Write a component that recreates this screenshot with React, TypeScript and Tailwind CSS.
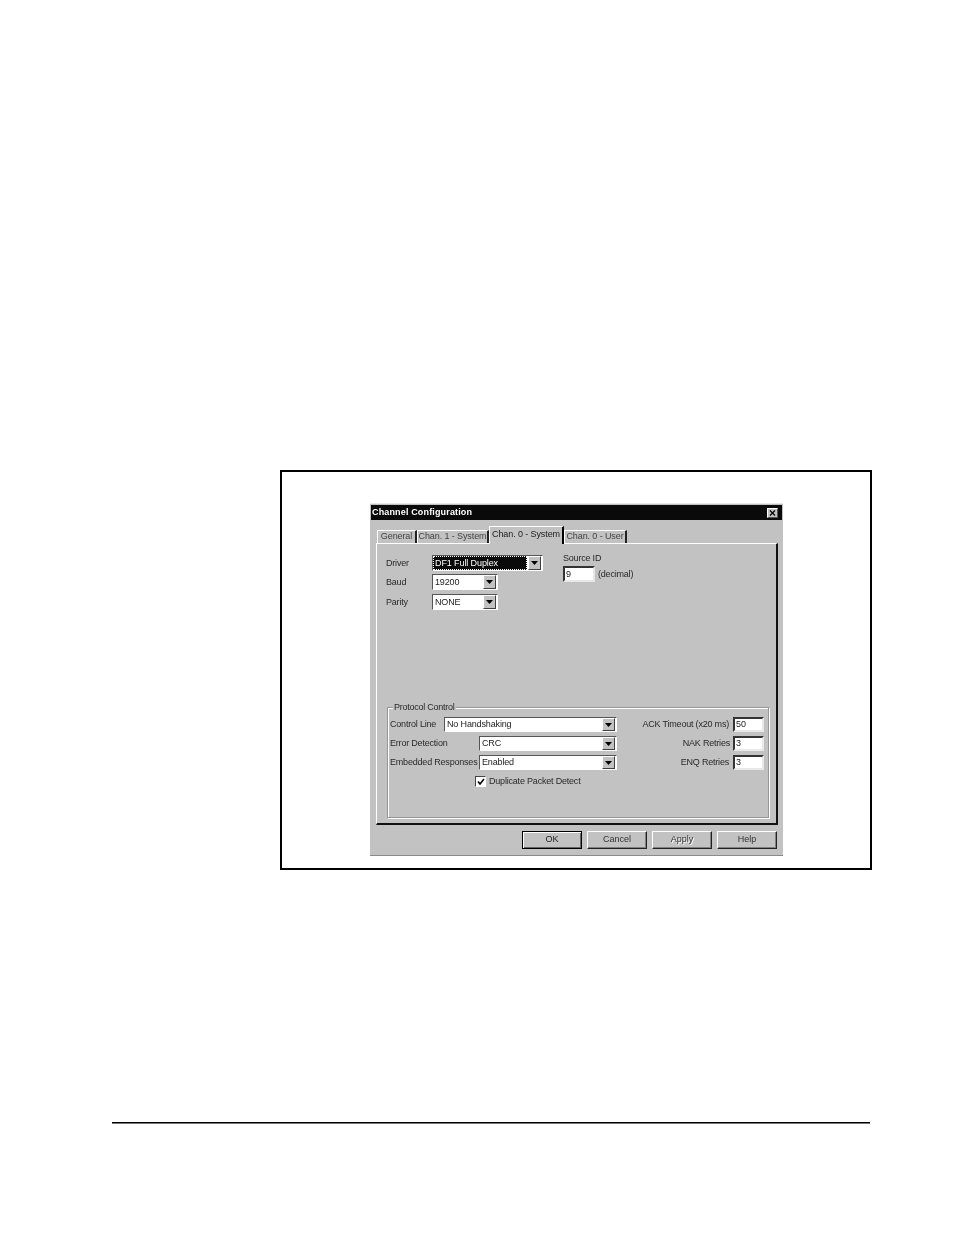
import type { ReactNode } from "react";

function Arrow() {
  return (
    <span className="flex h-full w-[13px] shrink-0 items-center justify-center border border-t-white border-l-white border-r-[#404040] border-b-[#404040] bg-[#c2c2c2]">
      <svg width="7" height="4" viewBox="0 0 7 4">
        <path d="M0 0h7L3.5 4z" fill="#000" />
      </svg>
    </span>
  );
}

function Select({ value, className }: { value: string; className: string }) {
  return (
    <div className={`flex items-center border border-t-[#555] border-l-[#555] border-r-white border-b-white bg-white pr-px ${className}`}>
      <span className="flex-1 truncate pl-[2px] text-[9px] leading-none tracking-[-0.15px] text-[#222]">{value}</span>
      <Arrow />
    </div>
  );
}

function Input({ value, className }: { value: string; className: string }) {
  return (
    <div className={`flex items-center border-2 border-t-[#333] border-l-[#333] border-r-[#e8e8e8] border-b-[#e8e8e8] bg-white pl-px text-[9px] leading-none text-[#222] ${className}`}>
      {value}
    </div>
  );
}

function Label({ children, className = "" }: { children: ReactNode; className?: string }) {
  return <span className={`whitespace-nowrap text-[9px] leading-none tracking-[-0.2px] text-[#2a2a2a] ${className}`}>{children}</span>;
}

function Tab({ label, width, active }: { label: string; width: string; active?: boolean }) {
  if (active) {
    return (
      <div className={`z-10 -mb-px flex h-[18px] items-center justify-center border-t border-l border-t-white border-l-white border-r-2 border-r-black bg-[#c2c2c2] pb-[2px] text-[9px] whitespace-nowrap tracking-[-0.1px] text-[#222] ${width}`}>
        {label}
      </div>
    );
  }
  return (
    <div className={`flex h-[13px] items-center justify-center border-t border-l border-t-white border-l-white border-r-2 border-r-[#222] pb-px text-[9px] whitespace-nowrap tracking-[-0.1px] text-[#444] ${width}`}>
      {label}
    </div>
  );
}

function Btn({ label, isDefault, disabled }: { label: string; isDefault?: boolean; disabled?: boolean }) {
  return (
    <div
      className={`flex h-[18px] w-[60px] items-center justify-center border text-[9px] ${
        isDefault
          ? "border-black text-[#222] shadow-[inset_1px_1px_0_#fff,inset_-1px_-1px_0_#666]"
          : "border-t-white border-l-white border-r-[#222] border-b-[#222] text-[#333] shadow-[inset_-1px_-1px_0_#808080]"
      } ${disabled ? "text-[#8a8a8a] [text-shadow:1px_1px_0_#fff]" : ""}`}
    >
      {label}
    </div>
  );
}

export default function App() {
  return (
    <div className="h-[1235px] w-[954px] overflow-hidden bg-white pt-[470px] font-['Liberation_Sans',Arial,sans-serif]">
      <div className="ml-[280px] h-[400px] w-[592px] border-2 border-black pt-[31px] pl-[88px]">
        {/* dialog */}
        <div className="flex h-[353px] w-[413px] flex-col bg-[#c2c2c2] px-px pt-[2px] pb-[7px] blur-[0.3px] shadow-[inset_0_1px_0_#e8e8e8,inset_0_-1px_0_#8a8a8a]">
          <div className="flex h-[15px] shrink-0 items-center justify-between bg-[#0a0a0a] pr-[4px] pl-px">
            <span className="text-[9px] leading-none font-bold tracking-[0.15px] text-white">Channel Configuration</span>
            <span className="flex h-[10px] w-[11px] items-center justify-center border border-t-white border-l-white border-r-[#555] border-b-[#555] bg-[#c2c2c2]">
              <svg width="7" height="6" viewBox="0 0 7 6">
                <path d="M1 0.5l5 5M6 0.5l-5 5" stroke="#000" strokeWidth="1.2" />
              </svg>
            </span>
          </div>

          <div className="mt-[5px] flex h-[18px] shrink-0 items-end pl-[6px]">
            <Tab label="General" width="w-[40px]" />
            <Tab label="Chan. 1 - System" width="w-[72px]" />
            <Tab label="Chan. 0 - System" width="w-[75px]" active />
            <Tab label="Chan. 0 - User" width="w-[63px]" />
          </div>

          <div className="ml-[5px] flex h-[282px] w-[402px] shrink-0 flex-col border-t border-l border-t-white border-l-white border-r-2 border-b-2 border-r-[#111] border-b-[#111] pt-[11px]">
            <div className="flex">
              <div className="flex w-[166px] flex-col pl-[9px]">
                <div className="flex h-[16px] items-center">
                  <Label className="w-[46px]">Driver</Label>
                  <div className="flex h-[16px] w-[111px] items-center border border-t-[#555] border-l-[#555] border-r-white border-b-white bg-white pr-px">
                    <span className="mr-px flex h-full flex-1 items-center border border-dotted border-white bg-[#0a0a0a] pl-px text-[9px] leading-none tracking-[-0.1px] text-white">DF1 Full Duplex</span>
                    <Arrow />
                  </div>
                </div>
                <div className="mt-[3px] flex h-[16px] items-center">
                  <Label className="w-[46px]">Baud</Label>
                  <Select value="19200" className="h-[16px] w-[66px]" />
                </div>
                <div className="mt-[4px] flex h-[16px] items-center">
                  <Label className="w-[46px]">Parity</Label>
                  <Select value="NONE" className="h-[16px] w-[66px]" />
                </div>
              </div>
              <div className="ml-[20px] flex flex-col">
                <Label className="mt-[-1px] h-[11px]">Source ID</Label>
                <div className="mt-[1px] flex items-center gap-[3px]">
                  <Input value="9" className="h-[16px] w-[32px]" />
                  <Label>(decimal)</Label>
                </div>
              </div>
            </div>

            <div className="relative mt-auto mr-[7px] mb-[5px] ml-[10px] flex h-[111px] justify-between border border-[#969696] pt-[9px] pr-[4px] pl-[2px] shadow-[1px_1px_0_#fff,inset_1px_1px_0_#fff]">
              <span className="absolute -top-[5px] left-[5px] bg-[#c2c2c2] px-px text-[9px] leading-none tracking-[-0.25px] text-[#2a2a2a]">Protocol Control</span>
              <div className="flex w-[227px] flex-col gap-[4px]">
                <div className="flex h-[15px] items-center justify-between">
                  <Label>Control Line</Label>
                  <Select value="No Handshaking" className="h-[15px] w-[173px]" />
                </div>
                <div className="flex h-[15px] items-center justify-between">
                  <Label>Error Detection</Label>
                  <Select value="CRC" className="h-[15px] w-[138px]" />
                </div>
                <div className="flex h-[15px] items-center justify-between">
                  <Label>Embedded Responses</Label>
                  <Select value="Enabled" className="h-[15px] w-[138px]" />
                </div>
                <div className="mt-[2px] flex items-center gap-[3px] pl-[85px]">
                  <span className="flex h-[11px] w-[11px] items-center justify-center border border-t-[#444] border-l-[#444] border-r-white border-b-white bg-white">
                    <svg width="8" height="8" viewBox="0 0 8 8">
                      <path d="M1 3.5l2 2.5 4-5" fill="none" stroke="#000" strokeWidth="1.6" />
                    </svg>
                  </span>
                  <Label>Duplicate Packet Detect</Label>
                </div>
              </div>
              <div className="flex flex-col gap-[4px]">
                <div className="flex h-[15px] items-center justify-end gap-[4px]">
                  <Label>ACK Timeout (x20 ms)</Label>
                  <Input value="50" className="h-[15px] w-[31px]" />
                </div>
                <div className="flex h-[15px] items-center justify-end gap-[3px]">
                  <Label>NAK Retries</Label>
                  <Input value="3" className="h-[15px] w-[31px]" />
                </div>
                <div className="flex h-[15px] items-center justify-end gap-[4px]">
                  <Label>ENQ Retries</Label>
                  <Input value="3" className="h-[15px] w-[31px]" />
                </div>
              </div>
            </div>
          </div>

          <div className="mt-[6px] flex justify-end gap-[5px] pr-[5px]">
            <Btn label="OK" isDefault />
            <Btn label="Cancel" />
            <Btn label="Apply" disabled />
            <Btn label="Help" />
          </div>
        </div>
      </div>

      <div className="mt-[252px] ml-[112px] h-px w-[758px] bg-black shadow-[0_1px_0_#777]" />
    </div>
  );
}
